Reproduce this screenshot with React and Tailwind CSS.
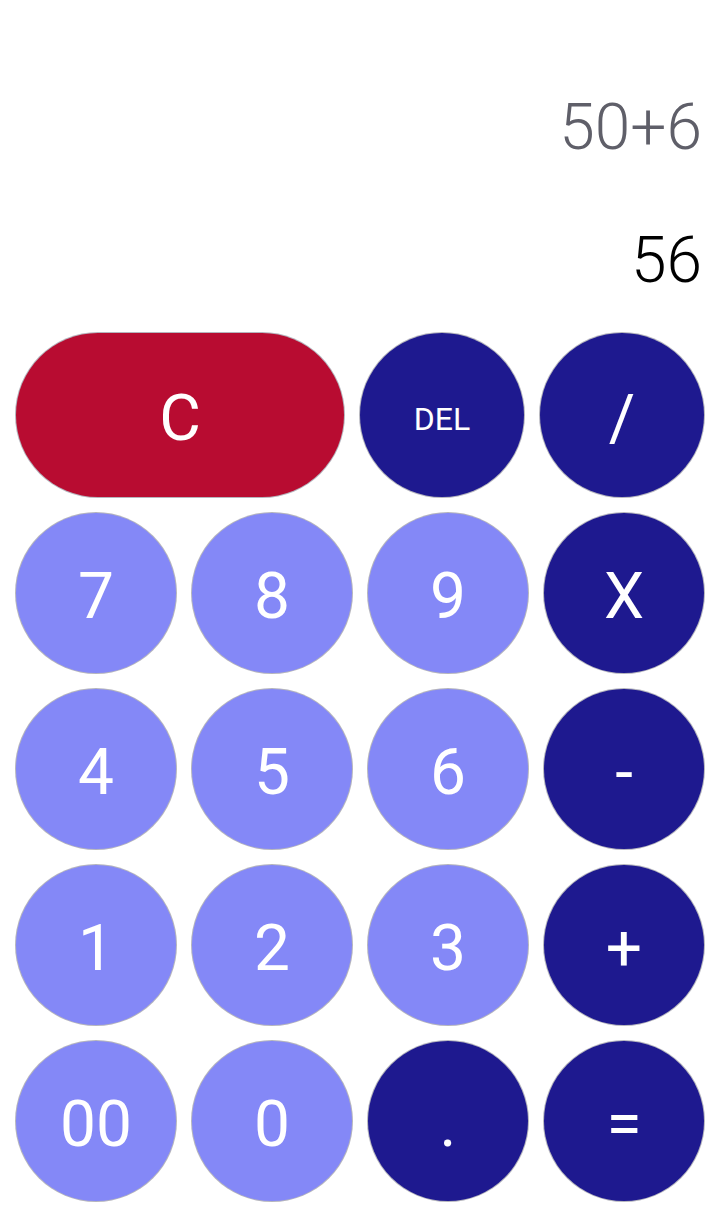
const LIGHT = 'bg-[#8488f7]'
const DARK = 'bg-[#1e198f]'

const ROWS = [
  [
    { label: '7', tone: LIGHT },
    { label: '8', tone: LIGHT },
    { label: '9', tone: LIGHT },
    { label: 'X', tone: DARK },
  ],
  [
    { label: '4', tone: LIGHT },
    { label: '5', tone: LIGHT },
    { label: '6', tone: LIGHT },
    { label: '-', tone: DARK },
  ],
  [
    { label: '1', tone: LIGHT },
    { label: '2', tone: LIGHT },
    { label: '3', tone: LIGHT },
    { label: '+', tone: DARK },
  ],
  [
    { label: '00', tone: LIGHT },
    { label: '0', tone: LIGHT },
    { label: '.', tone: DARK },
    { label: '=', tone: DARK },
  ],
]

function Key({ label, tone, className = 'w-[160px] h-[160px]', textSize = 'text-[64px]' }) {
  return (
    <button
      className={`${className} ${tone} ${textSize} shrink-0 rounded-full flex items-center justify-center pt-[7px] text-white leading-[64px] shadow-[0_0_0_1px_rgba(70,70,90,0.4)]`}
    >
      {label}
    </button>
  )
}

export default function App() {
  return (
    <div className="w-[720px] h-[1232px] bg-white flex flex-col font-['Roboto','Liberation_Sans',sans-serif]">
      {/* Display */}
      <div className="flex flex-col items-end pr-[18px]">
        <div className="mt-[96px] h-[64px] text-[64px] leading-[64px] font-light text-[#5f5f69]">50+6</div>
        <div className="mt-[69px] h-[64px] text-[64px] leading-[64px] font-light text-black">56</div>
      </div>

      {/* Keypad */}
      <div className="mt-[40px] px-4 flex flex-col gap-4">
        <div className="flex gap-4">
          <Key label="C" tone="bg-[#b80c31]" className="w-[328px] h-[164px]" />
          <Key label="DEL" tone={DARK} className="w-[164px] h-[164px]" textSize="text-[32px]" />
          <Key label="/" tone={DARK} className="w-[164px] h-[164px]" />
        </div>
        {ROWS.map((row, i) => (
          <div key={i} className="flex gap-4">
            {row.map(k => (
              <Key key={k.label} label={k.label} tone={k.tone} />
            ))}
          </div>
        ))}
      </div>
    </div>
  )
}
